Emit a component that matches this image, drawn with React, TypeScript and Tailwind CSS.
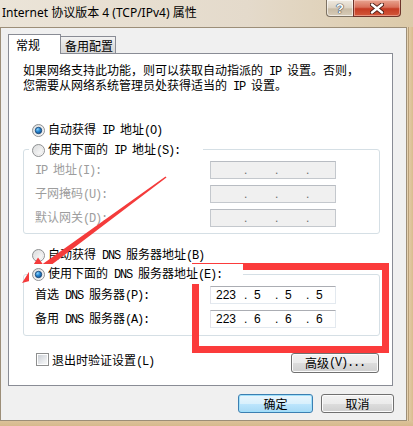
import React from "react";

const MONO = "whitespace-pre font-['Liberation_Mono',monospace] tracking-[-1.2px]";
const CJK = "font-['Noto_Sans_CJK_SC','Noto_Sans_CJK_JP',sans-serif]";

function W({ s }: { s: string }) {
  const parts = s.match(/[\x20-\x7e]+|[^\x20-\x7e]+/g) ?? [];
  return (
    <>
      {parts.map((p, i) =>
        /^[\x20-\x7e]/.test(p) ? (
          <span key={i} className={MONO}>
            {p}
          </span>
        ) : (
          <span key={i} className={CJK}>
            {p}
          </span>
        )
      )}
    </>
  );
}

function Radio({ checked }: { checked?: boolean }) {
  return (
    <svg width="13" height="13" viewBox="0 0 13 13" className="shrink-0">
      <defs>
        <linearGradient id="rfill" x1="0" y1="0" x2="1" y2="1">
          <stop offset="0" stopColor="#d2d4d6" />
          <stop offset="0.6" stopColor="#f2f2f2" />
          <stop offset="1" stopColor="#ffffff" />
        </linearGradient>
        <radialGradient id="rdot" cx="0.35" cy="0.3" r="0.8">
          <stop offset="0" stopColor="#8fd6ff" />
          <stop offset="0.45" stopColor="#2a8ad4" />
          <stop offset="1" stopColor="#0b4a8c" />
        </radialGradient>
      </defs>
      <circle cx="6.5" cy="6.5" r="6" fill="url(#rfill)" stroke="#8e9092" strokeWidth="1" />
      <circle cx="6.5" cy="6.5" r="4.3" fill="none" stroke="#e8e8e8" strokeWidth="1" />
      {checked && (
        <circle cx="6.5" cy="6.5" r="3.2" fill="url(#rdot)" stroke="#1b4675" strokeWidth="0.9" />
      )}
    </svg>
  );
}

function Checkbox() {
  return (
    <div className="flex h-[13px] w-[13px] shrink-0 items-center justify-center border border-[#8e8f8f] bg-white">
      <div className="h-[9px] w-[9px] bg-[linear-gradient(135deg,#cbcfd5,#eceef0_70%,#f6f6f6)]" />
    </div>
  );
}

function IpBox({ vals, disabled }: { vals: string[]; disabled?: boolean }) {
  return (
    <div
      className={`flex h-[18px] w-[126px] items-center border pl-[5px] font-['Liberation_Sans',sans-serif] text-[12px] leading-[14px] ${
        disabled
          ? "border-[#c4c8cd] border-t-[#b8bcc2] bg-[#f0f0f0] text-[#6d6d6d]"
          : "border-[#e3e9ef] border-t-[#abadb3] border-l-[#e2e3ea] bg-white text-black"
      }`}
    >
      <span className="w-[28px]">{vals[0]}</span>
      <span className="w-[10px]">.</span>
      <span className="w-[21px]">{vals[1]}</span>
      <span className="w-[10px]">.</span>
      <span className="w-[21px]">{vals[2]}</span>
      <span className="w-[10px]">.</span>
      <span className="w-[14px]">{vals[3]}</span>
    </div>
  );
}

function Row({ label, vals, disabled }: { label: string; vals: string[]; disabled?: boolean }) {
  return (
    <div className="flex h-[18px] items-center">
      <div className={`w-[175px] text-[12px] leading-[14px] ${disabled ? "text-[#9d9d9d]" : "text-black"}`}>
        <W s={label} />
      </div>
      <IpBox vals={vals} disabled={disabled} />
    </div>
  );
}

function WinButton({ label, def, w }: { label: string; def?: boolean; w: string }) {
  return (
    <div
      className={`flex h-[19px] items-center justify-center rounded-[3px] border text-[12px] leading-[14px] text-black ${w} ${
        def
          ? "border-[#3c7fb1] bg-[linear-gradient(#eaf6fd,#d9f0fc_50%,#bee6fd_50%,#a7d9f5)] shadow-[inset_0_0_0_1px_#9fe0fb]"
          : "border-[#707070] bg-[linear-gradient(#f2f2f2,#ebebeb_50%,#dddddd_50%,#cfcfcf)] shadow-[inset_0_0_0_1px_#fcfcfc]"
      }`}
    >
      <W s={label} />
    </div>
  );
}

export default function App() {
  return (
    <div className="relative flex h-[426px] w-[413px] flex-col overflow-hidden bg-[linear-gradient(90deg,#ebe4d8,#e4dacb_60%,#dccaa9)]">
      {/* Title bar */}
      <div className="flex h-[27px] shrink-0 items-start">
        <div className="pl-[2px] pt-[5px] font-['Noto_Sans','Noto_Sans_CJK_SC',sans-serif] text-[12px] leading-[16px] text-black">
          Internet 协议版本 4 (TCP/IPv4) 属性
        </div>
        <div className="ml-auto mr-[12px] flex">
          <div className="flex h-[17px] w-[27px] items-center justify-center rounded-bl-[4px] border border-t-0 border-r-0 border-[#7d7263] bg-[linear-gradient(#efe9df,#ddd3c3_50%,#c8bba5_55%,#d8ccb8)] shadow-[inset_0_0_0_1px_rgba(255,255,255,0.6)]">
            <span className="font-['Liberation_Sans',sans-serif] text-[13px] font-bold leading-[13px] text-white [text-shadow:0_0_1px_#2d3a4a,0_0_1px_#2d3a4a,0_0_1px_#2d3a4a]">
              ?
            </span>
          </div>
          <div className="flex h-[17px] w-[48px] items-center justify-center rounded-br-[4px] border border-t-0 border-[#6e342a] bg-[linear-gradient(#e8a591,#d9705a_45%,#c53b23_55%,#d2583b)] shadow-[inset_0_0_0_1px_rgba(255,210,200,0.5)]">
            <svg width="14" height="11" viewBox="0 0 14 11">
              <path d="M2 1.5 L12 9.5 M12 1.5 L2 9.5" stroke="#4a1a12" strokeWidth="4.2" strokeLinecap="round" />
              <path d="M2 1.5 L12 9.5 M12 1.5 L2 9.5" stroke="#ffffff" strokeWidth="2.4" strokeLinecap="round" />
            </svg>
          </div>
        </div>
      </div>

      <div className="flex">
        {/* Client area */}
        <div className="flex h-[394px] w-[407px] shrink-0 flex-col border border-[#9c8e78] bg-[#f0f0f0]">
          {/* Tabs */}
          <div className="ml-[7px] mt-[6px] flex h-[20px] items-end">
            <div className="relative z-10 flex h-[20px] w-[53px] items-start border border-b-0 border-[#898c95] bg-white pl-[7px] pt-[3px] text-[12px] leading-[14px] text-black">
              <span className={CJK}>常规</span>
            </div>
            <div className="-ml-[1px] flex h-[18px] w-[56px] items-start border border-b-0 border-[#898c95] bg-[linear-gradient(#f3f3f3,#e2e2e2_50%,#d6d6d6)] pl-[4px] pt-[2px] text-[12px] leading-[14px] text-black">
              <span className={CJK}>备用配置</span>
            </div>
          </div>

          {/* Panel */}
          <div className="-mt-[1px] ml-[7px] flex h-[333px] w-[385px] flex-col border border-[#898c95] bg-white">
            <div className="flex flex-col pl-[14px] pt-[9px] text-[12px] leading-[14px] text-black">
              <div className="h-[14px] whitespace-nowrap">
                <W s="如果网络支持此功能，则可以获取自动指派的 IP 设置。否则，" />
              </div>
              <div className="mt-[1px] h-[14px] whitespace-nowrap">
                <W s="您需要从网络系统管理员处获得适当的 IP 设置。" />
              </div>
            </div>

            <div className="ml-[23px] mt-[28px] flex h-[20px] items-center gap-[3px] text-[12px] leading-[14px] text-black">
              <Radio checked />
              <span>
                <W s="自动获得 IP 地址(O)" />
              </span>
            </div>

            <div className="relative z-10 ml-[20px] flex h-[20px] w-[174px] items-center gap-[3px] bg-white pl-[3px] text-[12px] leading-[14px] text-black">
              <Radio />
              <span className="whitespace-nowrap">
                <W s="使用下面的 IP 地址(S):" />
              </span>
            </div>
            <div className="-mt-[11px] ml-[14px] flex h-[85px] w-[357px] flex-col gap-[6px] rounded-[3px] border border-[#d5dfe5] pl-[11px] pt-[11px]">
              <Row label="IP 地址(I):" vals={["", "", "", ""]} disabled />
              <Row label="子网掩码(U):" vals={["", "", "", ""]} disabled />
              <Row label="默认网关(D):" vals={["", "", "", ""]} disabled />
            </div>

            <div className="ml-[23px] mt-[12px] flex h-[18px] items-center gap-[3px] text-[12px] leading-[14px] text-black">
              <Radio />
              <span className="whitespace-nowrap">
                <W s="自动获得 DNS 服务器地址(B)" />
              </span>
            </div>

            <div className="relative z-10 ml-[20px] flex h-[20px] w-[214px] items-center gap-[3px] bg-white pl-[3px] text-[12px] leading-[14px] text-black">
              <Radio checked />
              <span className="whitespace-nowrap">
                <W s="使用下面的 DNS 服务器地址(E):" />
              </span>
            </div>
            <div className="-mt-[10px] ml-[14px] flex h-[62px] w-[357px] flex-col gap-[6px] rounded-[3px] border border-[#d5dfe5] pl-[11px] pt-[11px]">
              <Row label="首选 DNS 服务器(P):" vals={["223", "5", "5", "5"]} />
              <Row label="备用 DNS 服务器(A):" vals={["223", "6", "6", "6"]} />
            </div>

            <div className="mt-[17px] flex h-[20px] items-start">
              <div className="ml-[27px] flex items-start gap-[3px] text-[12px] leading-[13px] text-black">
                <Checkbox />
                <span className="whitespace-nowrap">
                  <W s="退出时验证设置(L)" />
                </span>
              </div>
              <div className="ml-auto mr-[13px] flex h-[20px] w-[88px] items-center justify-center rounded-[3px] border border-[#707070] bg-[linear-gradient(#f2f2f2,#ebebeb_50%,#dddddd_50%,#cfcfcf)] text-[12px] leading-[14px] text-black shadow-[inset_0_0_0_1px_#fcfcfc]">
                <W s="高级(V)..." />
              </div>
            </div>
          </div>

          {/* Bottom buttons */}
          <div className="mr-[12px] mt-[8px] flex justify-end gap-[8px]">
            <WinButton label="确定" def w="w-[75px]" />
            <WinButton label="取消" w="w-[73px]" />
          </div>
        </div>
        {/* Right frame */}
        <div className="flex h-[394px] flex-1 bg-[linear-gradient(90deg,#e6d3b3,#d9bc8e)]">
          <div className="ml-[1px] h-full w-[1px] bg-[#b89f78]" />
        </div>
      </div>
      <div className="flex-1 bg-[linear-gradient(#dcc29a,#d6b98c)]" />

      {/* Red annotation box */}
      <div className="pointer-events-none absolute left-[192px] top-[263px] h-[90px] w-[197px] border-[7px] border-[#fb3b3b]" />

      {/* Red annotation arrow */}
      <svg className="pointer-events-none absolute left-0 top-0" width="413" height="426" viewBox="0 0 413 426">
        <polygon
          points="165.5,176.4 42.7,264 38,257.5 22,283 51,275.3 46.3,268.8 166.5,177.6"
          fill="#f43b3b"
        />
      </svg>
    </div>
  );
}
